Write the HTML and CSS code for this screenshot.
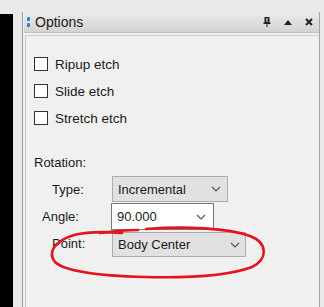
FILE: index.html
```html
<!DOCTYPE html>
<html lang="en">
<head>
<meta charset="UTF-8">
<meta name="viewport" content="width=device-width, initial-scale=1.0">
<title>Options</title>
<link rel="stylesheet" href="styles.css">
</head>
<body>
<div class="desk">
    <div class="canvas-strip"></div>
    <div class="dock">
        <div class="titlebar">
            <span class="grip"><i></i><i></i></span>
            <span class="title">Options</span>
            <span class="tools">
                <svg width="8" height="10" viewBox="0 0 8 10"><path d="M1.5 0h5v5.5h1v1.5h-3v3h-1v-3h-3v-1.5h1z" fill="#222"/><rect x="3" y="1" width="2" height="4" fill="#8a8a8a"/></svg>
                <svg width="8" height="5" viewBox="0 0 8 5"><path d="M0 5L4 0L8 5z" fill="#222"/></svg>
                <svg width="8" height="8" viewBox="0 0 8 8"><path d="M1 1L7 7M7 1L1 7" stroke="#222" stroke-width="2"/></svg>
            </span>
        </div>
        <div class="dock-body">
            <div class="pane">
                <div class="checks">
                    <label class="check"><span class="box"></span>Ripup etch</label>
                    <label class="check"><span class="box"></span>Slide etch</label>
                    <label class="check"><span class="box"></span>Stretch etch</label>
                </div>
                <div class="group-label">Rotation:</div>
                <div class="rot-grid">
                    <div class="row">
                        <span class="lbl">Type:</span>
                        <span class="combo combo-type">Incremental
                            <svg class="chev" width="10" height="6" viewBox="0 0 10 6"><path d="M1 1L5 5L9 1" fill="none" stroke="#555" stroke-width="1.2"/></svg>
                        </span>
                    </div>
                    <div class="row">
                        <span class="lbl lbl-angle">Angle:</span>
                        <span class="combo combo-angle">90.000
                            <svg class="chev" width="10" height="6" viewBox="0 0 10 6"><path d="M1 1L5 5L9 1" fill="none" stroke="#555" stroke-width="1.2"/></svg>
                        </span>
                    </div>
                    <div class="row">
                        <span class="lbl">Point:</span>
                        <span class="combo combo-point">Body Center
                            <svg class="chev" width="10" height="6" viewBox="0 0 10 6"><path d="M1 1L5 5L9 1" fill="none" stroke="#555" stroke-width="1.2"/></svg>
                        </span>
                    </div>
                </div>
            </div>
        </div>
    </div>
</div>

<!-- hand-drawn marker round the Point row -->
<svg class="marker" width="324" height="307" viewBox="0 0 324 307">
    <path d="M100 233 C115 231 128 230 138 230" fill="none" stroke="#e3141c" stroke-width="2.6" stroke-linecap="round"/>
    <path d="M146 229 C185 226 228 228 250 236 C268 243 268 259 252 267 C228 276 185 278 145 277 C105 276 66 272 55 262 C47 252 55 241 74 235 C90 231 110 232 122 233" fill="none" stroke="#e3141c" stroke-width="2.6" stroke-linecap="round"/>
</svg>
</body>
</html>
```

FILE: styles.css
```css
body {
    margin: 0;
    padding: 0;
    width: 324px;
    height: 307px;
    overflow: hidden;
    background-color: #e9e9e9;
    font-family: "Liberation Sans", Arial, sans-serif;
    font-size: 13px;
    color: #1a1a1a;
}
.desk {
    display: flex;
    height: 307px;
}
.canvas-strip {
    width: 13px;
    margin-top: 14px;
    background-color: #000;
}
.dock {
    margin-left: 9px;
    margin-top: 12px;
    width: 295px;
    border-left: 1px solid #9c9c9c;
    border-right: 1px solid #a4a4a4;
    padding-left: 1px;
    display: flex;
    flex-direction: column;
    background-color: #f0f0f0;
}
.titlebar {
    height: 20px;
    display: flex;
    align-items: center;
    background: linear-gradient(#ebebeb, #d3d3d3);
    border-bottom: 1px solid #c0c0c0;
    padding-left: 3px;
}
.grip {
    display: flex;
    flex-direction: column;
    gap: 2px;
    margin-right: 5px;
}
.grip i {
    display: block;
    width: 3px;
    height: 4px;
    background-color: #2f7fd8;
    border-radius: 1px;
}
.title {
    font-size: 14px;
    flex: 1;
}
.tools {
    display: flex;
    align-items: center;
    gap: 13px;
    margin-right: 6px;
}
.dock-body {
    flex: 1;
    padding: 2px 0 0 1px;
}
.pane {
    height: 100%;
    border-left: 1px solid #c9c9c9;
    border-top: 1px solid #d0d0d0;
    padding: 21px 0 0 8px;
    box-sizing: border-box;
}
.checks {
    display: flex;
    flex-direction: column;
    gap: 13px;
}
.check {
    display: flex;
    align-items: center;
    height: 14px;
    gap: 7px;
    font-size: 13.5px;
}
.box {
    width: 12px;
    height: 12px;
    border: 1px solid #333;
    background-color: #fff;
}
.group-label {
    margin-top: 30px;
    line-height: 16px;
}
.rot-grid {
    margin-top: 5px;
    display: flex;
    flex-direction: column;
}
.row {
    display: flex;
    align-items: center;
}
.lbl {
    width: 78px;
    box-sizing: border-box;
    padding-left: 18px;
}
.lbl-angle {
    padding-left: 8px;
}
.combo {
    display: flex;
    align-items: center;
    justify-content: space-between;
    box-sizing: border-box;
    padding: 0 6px 0 5px;
    background-color: #e1e1e1;
    border: 1px solid #adadad;
}
.combo-type {
    width: 116px;
    height: 26px;
}
.combo-angle {
    width: 103px;
    height: 27px;
    margin-left: -1px;
    margin-top: 1px;
    background-color: #fff;
    border-color: #7a7a7a;
    padding-right: 7px;
}
.combo-point {
    width: 134px;
    height: 25px;
    margin-top: 2px;
    padding-right: 5px;
}
.marker {
    position: absolute;
    left: 0;
    top: 0;
    pointer-events: none;
}
```
